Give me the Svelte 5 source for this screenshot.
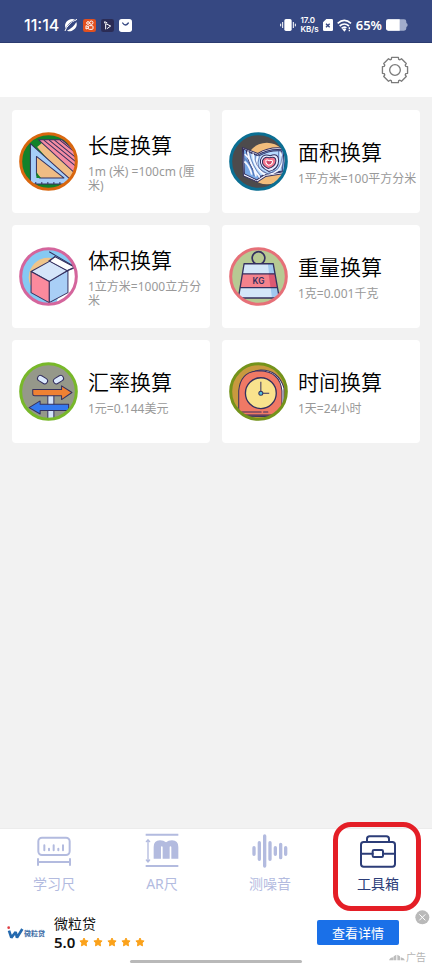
<script>
  const tools = [
    { id: 'length', title: '长度换算', note: '1m (米) =100cm (厘米)', ring: '#d9670f', fill: '#12822a' },
    { id: 'area', title: '面积换算', note: '1平方米=100平方分米', ring: '#0b6f93', fill: '#4d4b4c' },
    { id: 'volume', title: '体积换算', note: '1立方米=1000立方分米', ring: '#d4659c', fill: '#86c9f3' },
    { id: 'weight', title: '重量换算', note: '1克=0.001千克', ring: '#e67078', fill: '#b7ca93' },
    { id: 'currency', title: '汇率换算', note: '1元=0.144美元', ring: '#78b82a', fill: '#95988a' },
    { id: 'time', title: '时间换算', note: '1天=24小时', ring: '#74931b', fill: '#c8993f' }
  ];
  const tabs = [
    { id: 'ruler', label: '学习尺' },
    { id: 'ar', label: 'AR尺' },
    { id: 'noise', label: '测噪音' },
    { id: 'toolbox', label: '工具箱' }
  ];
  let active = $state('toolbox');

  // Eight shallow teeth round a centre of 42,42: [angle offset, radius] for each corner.
  const tooth = [[-19, 34], [-15, 39], [15, 39], [19, 34]];
  const gear = Array.from({ length: 8 }, (_, i) =>
    tooth.map(([a, r]) => {
      const t = ((i * 45 + a) * Math.PI) / 180;
      return (42 + r * Math.sin(t)).toFixed(1) + ',' + (42 - r * Math.cos(t)).toFixed(1);
    }).join(' ')
  ).join(' ');
</script>

<div class="app">
  <div class="status">
    <div class="left">
      <span class="clock">11:14</span>
      <svg width="14" height="14" viewBox="0 0 42 42">
        <path d="M5 31C-1 19 8 5 24 3q6 0 9 2Q15 12 5 31zM9 38Q27 30 37 12c5 13-5 25-18 28q-6 0-10-2z" fill="#fff" />
        <path d="M3 39Q8 20 39 4" fill="none" stroke="#fff" stroke-width="3" />
        <path d="M9 33Q18 14 34 9 30 25 9 33z" fill="#364882" />
      </svg>
      <svg width="13" height="13" viewBox="0 0 39 39">
        <rect width="39" height="39" rx="7" fill="#e2501f" />
        <g fill="none" stroke="#fff" stroke-width="3">
          <circle cx="15" cy="12" r="4" /><circle cx="25" cy="11" r="5" />
          <rect x="16" y="20" width="14" height="11" rx="3" /><path d="M16 23l-7-3v10l7-3" />
        </g>
      </svg>
      <svg width="13" height="13" viewBox="0 0 39 39">
        <rect width="39" height="39" rx="7" fill="#2b2c55" />
        <path d="M14 31V14l15 7-11 8M11 13V8l8 4" fill="none" stroke="#fff" stroke-width="3" />
      </svg>
      <svg width="13" height="13" viewBox="0 0 39 39">
        <rect width="39" height="39" rx="8" fill="#fff" />
        <path d="M11 12q8 12 17 0" fill="none" stroke="#364882" stroke-width="4" stroke-linecap="round" />
      </svg>
    </div>
    <div class="right">
      <svg width="16" height="14" viewBox="0 0 48 42">
        <rect x="13" y="3" width="22" height="36" rx="5" fill="#fff" />
        <path d="M8 12v18M40 12v18M2 17v8M46 17v8" stroke="#fff" stroke-width="3" />
      </svg>
      <span class="speed"><span>17.0</span><span>KB/s</span></span>
      <svg width="10" height="12" viewBox="0 0 30 36">
        <path d="M10 0h16q4 0 4 4v28q0 4-4 4H4q-4 0-4-4V10z" fill="#fff" />
        <path d="M9 14l11 11M20 14L9 25" stroke="#364882" stroke-width="4" />
      </svg>
      <svg width="15" height="13" viewBox="0 0 45 39" fill="none" stroke="#fff" stroke-width="5">
        <path d="M2 13q20-18 40 0M8 21q14-12 28 0M14 28q8-7 14-1" />
        <path d="M16 31l6-3 6 3-6 7z" fill="#fff" stroke="none" />
        <path d="M37 25v12" stroke-width="4" stroke-dasharray="5 2" />
      </svg>
      <span class="percent">65%</span>
      <svg width="22" height="12" viewBox="0 0 66 36">
        <path d="M7 1h47q7 0 7 7v4q4 1 4 6t-4 6v4q0 7-7 7H7q-7 0-7-7V8q0-7 7-7z" fill="#a2adcc" />
        <path d="M7 1h34v34H7q-7 0-7-7V8q0-7 7-7z" fill="#fff" />
      </svg>
    </div>
  </div>

  <header>
    <button class="settings" aria-label="设置">
      <svg width="28" height="28" viewBox="0 0 84 84" fill="none" stroke="#7b7b7b" stroke-width="4" stroke-linejoin="round">
        <polygon points={gear} />
        <circle cx="42" cy="42" r="16" />
      </svg>
    </button>
  </header>

  <main>
    {#each tools as tool (tool.id)}
      <button class="card">
        <svg class="badge" viewBox="34 79 176 176">
          <defs><clipPath id={'clip-' + tool.id}><circle cx="122" cy="167" r="82" /></clipPath></defs>
          <circle cx="122" cy="167" r="84" fill={tool.fill} />
          <g clip-path={'url(#clip-' + tool.id + ')'} stroke="#34305f" stroke-width="3" stroke-linejoin="round">
            {#if tool.id === 'length'}
              <path d="M88 124l16-14 104 84v24l-26 14z" fill="#f0bd85" stroke="none" />
              <path d="M92 102h70l48 40v68z" fill="#f58ca3" />
              <path d="M108 103l100 82M124 103l86 70M140 103l70 57M156 103l54 44" fill="none" />
              <path d="M68 114l134 120H68z" fill="#a5cdf8" />
              <path d="M86 152l82 64H96q-10-4-10-14z" fill="#efbc84" />
              <path d="M86 198v18h14q-8-8-14-18z" fill="#12822a" stroke="none" />
              <path d="M84 234v-6M102 234v-6M120 234v-6M138 234v-6M156 234v-6" />
            {:else if tool.id === 'area'}
              <circle cx="147" cy="173" r="62" fill="#f1bd7c" stroke="none" />
              <path d="M74 125l46 18q36-22 80-15l5 74-62 10-24 16-42-18z" fill="#f6f7ff" />
              <path d="M77 130l42 18q34-21 76-16l6 65-62 10-22 15-37-18z" fill="#7aaae8" />
              <path d="M86 136q6 44 38 78l19-10q28-4 50-9l-3-60q-36-3-68 16z" fill="#b7dbff" />
              <g fill="none" stroke="#f6f8ff" stroke-width="5">
                <path d="M90 137q4 38 36 78M106 143q-2 35 34 64M121 151q-14 24 14 48 24 11 43-4 20-17 10-55M80 167q16 13 22 39M81 145q19 13 34 67" />
              </g>
              <g fill="none" stroke="#445795" stroke-width="2">
                <path d="M95 139q6 40 36 74M113 146q-8 35 34 57 43-2 46-54M82 158q19 18 27 53M125 152q-17 43 28 52 32-9 29-69" />
              </g>
              <path d="M128 162q8-20 29-12 24-11 25 15 0 25-29 32-29-14-25-35z" fill="#e8edff" />
              <path d="M134 164q7-14 20-8 19-6 20 9-1 18-23 23-20-9-17-24z" fill="#f2778d" />
              <path d="M144 164q4-4 10 1 9-3 10 3-2 9-12 10-9-4-8-14z" fill="#cf4668" stroke="#fff" />
            {:else if tool.id === 'volume'}
              <circle cx="121" cy="169" r="58" fill="#efc58b" stroke="none" />
              <path d="M180 140h30v92l-65 15z" fill="#fff" stroke="none" />
              <path d="M124 180v65l56-30v-66z" fill="#a9cff6" />
              <path d="M70 152l56-31 53 28-55 33z" fill="#d5e5f9" />
              <path d="M70 152l54 30v63l-54-30z" fill="#fb8a9d" />
              <path d="M142 108l60 32-24 10-53-29z" fill="#fff" />
              <path d="M124 93l78 46M142 107l-20 14M177 150l25-12" fill="none" />
            {:else if tool.id === 'weight'}
              <circle cx="122" cy="112" r="19" fill="none" stroke-width="5" />
              <path d="M79 129h87l18 102H62z" fill="#d4e7f9" stroke="none" />
              <path d="M150 129h16l18 102h-22z" fill="#a1c9ef" stroke="none" />
              <path d="M73 159h97l8 41H66z" fill="#f4828c" stroke="none" />
              <path d="M152 159h18l8 41h-20z" fill="#db5a73" stroke="none" />
              <path d="M79 129h87l18 102H62zM73 159h97M66 200h112" fill="none" stroke-width="4" />
              <text x="122" y="189" text-anchor="middle" class="kg">KG</text>
            {:else if tool.id === 'currency'}
              <path d="M120 170h18v80h-18z" fill="#d4e4fa" />
              <path d="M75 161h86v-11l31 20-31 21v-11H81q-6 0-6-6z" fill="#ef8133" />
              <path d="M182 205H97v-10l-33 20 33 19v-10h79q6 0 6-6z" fill="#3579ee" />
              <rect x="88" y="123" width="32" height="17" rx="8" transform="rotate(31 104 132)" fill="#dceafe" />
              <rect x="136" y="123" width="32" height="17" rx="8" transform="rotate(-31 152 132)" fill="#dceafe" />
            {:else}
              <path d="M74 240v-80q3-52 55-57 53 0 69 54v85z" fill="#fff" />
              <path d="M63 240v-75q5-60 62-60 61 2 67 60v75z" fill="#f07965" />
              <path d="M72 228h58M137 228h13M73 237h91" stroke-linecap="round" />
              <circle cx="129" cy="172" r="46" fill="#f9e38d" stroke-width="4" />
              <path d="M129 138v34h25" fill="none" />
              <circle cx="129" cy="172" r="6" fill="#50c4df" />
            {/if}
          </g>
          <circle cx="122" cy="167" r="83" fill="none" stroke={tool.ring} stroke-width="9" />
        </svg>
        <span class="words">
          <span class="title">{tool.title}</span>
          <span class="note">{tool.note}</span>
        </span>
      </button>
    {/each}
  </main>

  <nav>
    {#each tabs as tab (tab.id)}
      <button class="tab" class:active={active === tab.id} onclick={() => (active = tab.id)}>
        <svg width="36" height="36" viewBox="0 0 108 108" fill="none" stroke="currentColor" stroke-width="6" stroke-linecap="round">
          {#if tab.id === 'ruler'}
            <rect x="7" y="14" width="94" height="52" rx="11" />
            <path d="M25 37v15M39 47v5M53 37v15M67 47v5M81 37v15M6 78v18M102 78v18M6 87h96" />
          {:else if tab.id === 'ar'}
            <path d="M5 5h98M5 99h98" stroke-linecap="butt" />
            <path d="M12 20v66M7 26l5-6 5 6M7 81l5 6 5-6" stroke-width="4" />
            <path d="M29 77V42q0-20 19-20 11 0 18 6 7-6 18-6 19 0 19 20v35H82V43q0-3-3-3-2 0-2 3v34H56V43q0-3-3-3-2 0-2 3v34z" fill="currentColor" stroke="none" />
          {:else if tab.id === 'noise'}
            <path d="M6 44v20M22 29v50M38 9v90M54 29v50M70 44v20M86 34v40M101 44v20" stroke-width="10" />
          {:else}
            <rect x="3" y="27" width="102" height="74" rx="8" />
            <path d="M21 27v-9q0-8 8-8h50q8 0 8 8v9M5 62h33M70 62h33" />
            <rect x="38" y="51" width="31" height="21" rx="4" />
          {/if}
        </svg>
        <span>{tab.label}</span>
        {#if tab.id === 'toolbox'}<i class="marker"></i>{/if}
      </button>
    {/each}
  </nav>

  <footer>
    <div class="brand">
      <svg width="17" height="14" viewBox="0 0 51 42">
        <path d="M6 14l7 21 13-17 4 17L46 9" fill="none" stroke="#2469ae" stroke-width="8" stroke-linejoin="bevel" />
        <circle cx="5" cy="5" r="4" fill="#df3d43" />
      </svg>
      <span>微粒贷</span>
    </div>
    <div class="info">
      <span class="name">微粒贷</span>
      <span class="rating">
        <b>5.0</b>
        <span class="stars">
          {#each [1, 2, 3, 4, 5] as n (n)}
            <svg width="10" height="10" viewBox="0 0 20 20">
              <path d="M10 2l2.500 5.200 5.700.8-4.100 4 1 5.700L10 15l-5.100 2.700 1-5.700-4.100-4 5.700-.8z" fill="#fba21b" stroke="#fba21b" stroke-width="2" stroke-linejoin="round" />
            </svg>
          {/each}
        </span>
      </span>
    </div>
    <button class="detail">查看详情</button>
    <button class="close" aria-label="关闭">
      <svg width="15" height="15" viewBox="0 0 45 45">
        <circle cx="22" cy="22" r="21" fill="#b9b9b9" />
        <path d="M13 13l18 18M31 13L13 31" stroke="#fff" stroke-width="3" />
      </svg>
    </button>
    <span class="ad">
      <svg width="16" height="7" viewBox="0 0 48 21" fill="#bdbdbd">
        <path d="M0 19q3-9 13-9v9zM14 19V7l8-5v17zM25 19V2l8 5v12zM35 19v-9q10 1 13 9z" />
      </svg>
      <span>广告</span>
    </span>
    <i class="home"></i>
  </footer>
</div>

<style>
  :global(body) { margin: 0; }
  .app {
    min-height: 100vh;
    display: flex;
    flex-direction: column;
    background: #f2f2f2;
    font-family: "Noto Sans", "Noto Sans CJK SC", sans-serif;
  }
  svg { display: block; flex: none; }
  button {
    border: 0;
    padding: 0;
    margin: 0;
    background: none;
    font: inherit;
    color: inherit;
    cursor: pointer;
  }
  .status {
    height: 43px;
    box-sizing: border-box;
    padding: 8px 24px 0;
    display: flex;
    align-items: center;
    justify-content: space-between;
    background: #364882;
    border-bottom: 1px solid #2b3b70;
    color: #fff;
  }
  .left, .right { display: flex; align-items: center; }
  .left { gap: 5px; }
  .right { gap: 4px; }
  .clock { font: 500 16px Inter, sans-serif; }
  .speed {
    display: flex;
    flex-direction: column;
    font: 600 8px Inter, sans-serif;
  }
  .speed span { line-height: 9px; }
  .percent { font-size: 13px; line-height: 18px; font-weight: 600; }
  header {
    height: 54px;
    padding: 0 23px;
    display: flex;
    align-items: center;
    justify-content: flex-end;
    background: #fff;
  }
  main {
    flex: 1;
    display: grid;
    grid-template-columns: 1fr 1fr;
    align-content: start;
    gap: 12px;
    padding: 13px 12px;
  }
  .card {
    min-height: 103px;
    display: flex;
    align-items: center;
    gap: 10px;
    padding: 0 2px 0 7px;
    background: #fff;
    border-radius: 4px;
    text-align: left;
  }
  .badge { width: 59px; height: 59px; }
  .words { display: flex; flex-direction: column; gap: 7px; min-width: 0; }
  .title {
    font-family: "Noto Sans CJK SC", sans-serif;
    font-size: 21px;
    line-height: 27px;
    font-weight: 350;
    color: #000;
  }
  .note { font-size: 12px; line-height: 14px; color: #999; }
  .kg { font: 600 25px Inter, sans-serif; fill: #34305f; stroke: none; }
  nav {
    position: relative;
    z-index: 1;
    display: flex;
    background: #fff;
    height: 76px;
    border-top: 1px solid #ececec;
  }
  .tab {
    flex: 1;
    position: relative;
    display: flex;
    flex-direction: column;
    align-items: center;
    gap: 5px;
    padding-top: 4px;
    color: #b3bbdf;
    font-size: 14px;
    line-height: 20px;
  }
  .active { color: #2c3d78; }
  .marker {
    position: absolute;
    inset: -7px 11px -6px 9px;
    border: 5px solid #e41e26;
    border-radius: 18px;
  }
  footer {
    position: relative;
    height: 59px;
    box-sizing: border-box;
    display: flex;
    align-items: center;
    padding: 0 33px 4px 7px;
    background: #fff;
  }
  .brand {
    width: 47px;
    display: flex;
    align-items: center;
    font-size: 7px;
    font-weight: 700;
    color: #3a6ba5;
  }
  .info { flex: 1; display: flex; flex-direction: column; color: #111; }
  .name { font-size: 14px; line-height: 18px; }
  .rating { display: flex; align-items: center; gap: 4px; font-size: 15px; line-height: 18px; }
  b { font-weight: 600; }
  .stars { display: flex; gap: 4px; }
  .detail {
    width: 82px;
    height: 25px;
    border-radius: 2px;
    background: #1a70e8;
    color: #fff;
    font-size: 13px;
    line-height: 24px;
  }
  .close { position: absolute; top: 5px; right: 2px; }
  .ad {
    position: absolute;
    right: 6px;
    bottom: 0;
    display: flex;
    align-items: center;
    gap: 1px;
    font-family: "Noto Sans CJK SC", sans-serif;
    font-size: 10px;
    line-height: 14px;
    color: #b5b5b5;
  }
  .home {
    position: absolute;
    left: 30%;
    right: 30%;
    bottom: 1px;
    height: 3px;
    border-radius: 2px;
    background: #b9b9b9;
  }
</style>
